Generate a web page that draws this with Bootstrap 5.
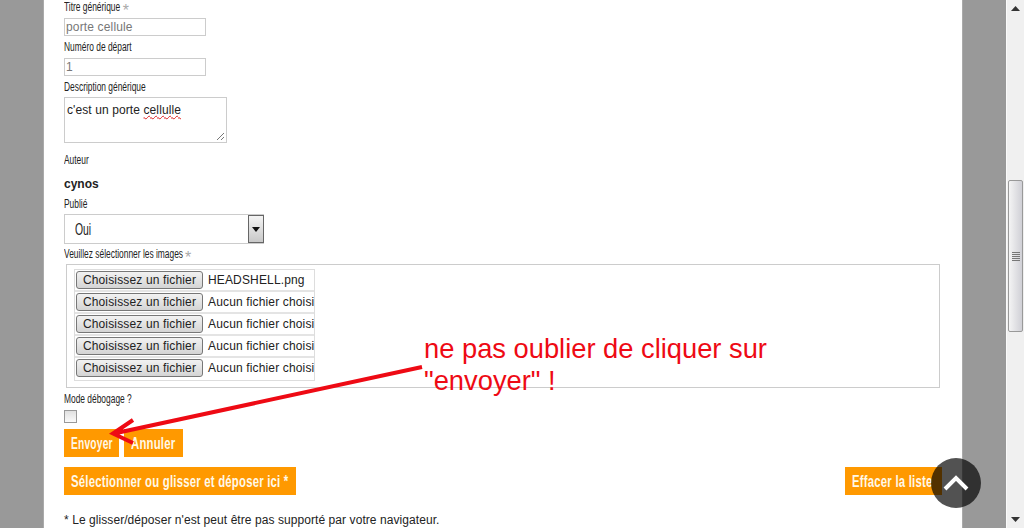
<!DOCTYPE html>
<html lang="fr">

<head>
    <meta charset="UTF-8">
    <meta name="viewport" content="width=device-width, initial-scale=1.0">
    <title>Ajout d'images</title>
    <link href="https://cdn.jsdelivr.net/npm/bootstrap@5.3.2/dist/css/bootstrap.min.css" rel="stylesheet">
    <style>
        html, body { height: 528px; overflow: hidden; }
        body { background: #999; font-family: "Liberation Sans", Arial, sans-serif; color: #222; position: relative; }
        .page-wrap { width: 1006px; height: 528px; padding-left: 43px; }
        .page-sheet { width: 920px; height: 528px; background: #fff; padding: 0 20px; overflow: hidden; border-left: 1px solid #aaa; border-right: 1px solid #aaa; }
        .lbl { display: block; width: 140%; height: 14px; font-size: 12px; line-height: 14px; color: #222; margin: 0; transform: scaleX(.7); transform-origin: left center; }
        .lbl i { display: inline-block; margin-left: 2px; font-style: normal; color: #aaa; font-size: 12px; line-height: 12px; vertical-align: -4px; transform: scale(1.9, 1.3); }
        .fld { display: block; width: 142px; height: 18px; border: 1px solid #ccc; border-radius: 0; padding: 0 1px; font-size: 12px; letter-spacing: .15px; line-height: 16px; color: #777; font-family: "Liberation Sans", sans-serif; }
        .fld-area { width: 163px; height: 46px; border: 1px solid #ccc; padding: 4px 2px; font-size: 12px; letter-spacing: .1px; line-height: 16px; color: #222; position: relative; }
        .fld-area span { text-decoration: underline wavy #d22; text-decoration-thickness: 1px; }
        .fld-area svg { position: absolute; right: 1px; bottom: 1px; }
        .pick { width: 200px; height: 30px; border: 1px solid #ccc; border-right: 0; font-size: 16px; color: #222; padding-left: 10px; }
        .pick-val { display: inline-block; padding-top: 2px; transform: scaleX(.65); transform-origin: left center; }
        .pick-arrow { width: 16px; height: 28px; border: 1px solid #666; background: linear-gradient(#f4f4f4, #c8c8c8); }
        .file-box { width: 874px; height: 124px; margin-left: 2px; border: 1px solid #ccc; padding: 4px 7px; }
        .file-list { width: 241px; border: 1px solid #ddd; }
        .file-row { height: 22px; border-bottom: 2px solid #e4e4e4; font-size: 12px; letter-spacing: .15px; color: #222; padding-left: 1px; white-space: nowrap; overflow: hidden; }
        .file-row:last-child { border-bottom-color: transparent; }
        .file-btn { height: 18px; width: 127px; padding: 0; border: 1px solid #777; border-radius: 3px; background: linear-gradient(#f2f2f2, #d4d4d4); font-size: 12px; letter-spacing: .15px; line-height: 16px; color: #222; margin-right: 5px; flex: none; }
        .chk { width: 13px; height: 13px; border: 1px solid #999; background: linear-gradient(#e0e0e0, #fafafa); }
        .act { background: #ff9900; color: #fff8e8; border: 0; border-radius: 0; height: 28px; padding: 2px 7px 0; font-size: 16px; font-weight: 700; line-height: 26px; letter-spacing: .3px; white-space: nowrap; text-align: left; }
        .act:hover { background: #ff9900; color: #fff8e8; }
        .act span { display: inline-block; transform: scaleX(.71); transform-origin: left center; }
        .w-send { width: 55px; }
        .w-send span { transform: scaleX(.64); }
        .w-cancel { width: 59px; }
        .w-pick { width: 232px; }
        .w-clear { width: 97px; }
        .note { font-size: 12px; letter-spacing: .07px; line-height: 14px; color: #222; margin: 18px 0 0; }
        .author { font-size: 12px; font-weight: 700; line-height: 14px; }
        .sp-3 { margin-top: 3px; }
        .sp-6 { margin-top: 6px; }
        .sp-10 { margin-top: 10px; }
        .fake-bar { position: absolute; top: 0; left: 1006px; width: 18px; height: 528px; background: #f0f0f0; border-left: 1px solid #fafafa; }
        .fake-thumb { position: absolute; left: 1px; top: 180px; width: 15px; height: 152px; border: 1px solid #999; border-radius: 2px; background: linear-gradient(90deg, #f4f4f4, #d0d0d6); }
        .tip-text { position: absolute; left: 424px; top: 333px; color: #ee0a14; font-size: 27.3px; line-height: 32px; white-space: nowrap; }
        .tip-arrow { position: absolute; left: 0; top: 0; pointer-events: none; }
        .go-top { position: absolute; left: 931px; top: 458px; width: 50px; height: 50px; border-radius: 50%; background: rgba(0, 0, 0, .68); }
    </style>
</head>

<body>
    <div class="page-wrap">
        <div class="page-sheet">
            <label class="lbl">Titre générique <i>*</i></label>
            <input class="fld mt-1" type="text" value="porte cellule">
            <label class="lbl mt-1">Numéro de départ</label>
            <input class="fld mt-1" type="text" value="1">
            <label class="lbl mt-1">Description générique</label>
            <div class="fld-area sp-3">c'est un porte <span>cellulle</span>
                <svg width="10" height="10" viewBox="0 0 10 10"><path d="M2 9 9 2M6 9 9 6" stroke="#777" fill="none"/></svg>
            </div>
            <label class="lbl sp-10">Auteur</label>
            <div class="author sp-10">cynos</div>
            <label class="lbl sp-6">Publié</label>
            <div class="pick d-flex align-items-center justify-content-between sp-3">
                <span class="pick-val">Oui</span>
                <span class="pick-arrow d-flex align-items-center justify-content-center">
                    <svg width="8" height="5" viewBox="0 0 8 5"><path d="M0 0h8L4 5z" fill="#111"/></svg>
                </span>
            </div>
            <label class="lbl sp-3">Veuillez sélectionner les images <i>*</i></label>
            <div class="file-box sp-3">
                <div class="file-list">
                    <div class="file-row d-flex align-items-center"><button class="file-btn" type="button">Choisissez un fichier</button>HEADSHELL.png</div>
                    <div class="file-row d-flex align-items-center"><button class="file-btn" type="button">Choisissez un fichier</button>Aucun fichier choisi</div>
                    <div class="file-row d-flex align-items-center"><button class="file-btn" type="button">Choisissez un fichier</button>Aucun fichier choisi</div>
                    <div class="file-row d-flex align-items-center"><button class="file-btn" type="button">Choisissez un fichier</button>Aucun fichier choisi</div>
                    <div class="file-row d-flex align-items-center"><button class="file-btn" type="button">Choisissez un fichier</button>Aucun fichier choisi</div>
                </div>
            </div>
            <label class="lbl mt-1">Mode débogage ?</label>
            <div class="chk mt-1"></div>
            <div class="d-flex sp-6" style="gap:5px">
                <button class="btn act w-send" type="button"><span>Envoyer</span></button>
                <button class="btn act w-cancel" type="button"><span>Annuler</span></button>
            </div>
            <div class="d-flex justify-content-between sp-10" style="width:878px">
                <button class="btn act w-pick" type="button"><span>Sélectionner ou glisser et déposer ici *</span></button>
                <button class="btn act w-clear" type="button"><span>Effacer la liste</span></button>
            </div>
            <p class="note">* Le glisser/déposer n'est peut être pas supporté par votre navigateur.</p>
        </div>
    </div>

    <div class="fake-bar">
        <svg class="position-absolute" style="left:4px;top:6px" width="9" height="5" viewBox="0 0 9 5"><path d="M0 5h9L4.500 0z" fill="#333"/></svg>
        <div class="fake-thumb d-flex align-items-center justify-content-center">
            <svg width="8" height="9" viewBox="0 0 8 9"><path d="M0 .5h8M0 2.500h8M0 4.500h8M0 6.500h8M0 8.500h8" stroke="#777"/></svg>
        </div>
        <svg class="position-absolute" style="left:4px;top:517px" width="9" height="5" viewBox="0 0 9 5"><path d="M0 0h9L4.500 5z" fill="#333"/></svg>
    </div>

    <div class="tip-text">ne pas oublier de cliquer sur<br>"envoyer" !</div>
    <svg class="tip-arrow" width="1024" height="528" viewBox="0 0 1024 528">
        <path d="M422 367 114 433.500M133 420 113 433.500 133 443" fill="none" stroke="#ee0a14" stroke-width="4"/>
    </svg>
    <div class="go-top d-flex align-items-center justify-content-center">
        <svg width="26" height="16" viewBox="0 0 26 16"><path d="M2 14 13 3 24 14" fill="none" stroke="#fff" stroke-width="4"/></svg>
    </div>
    <script src="https://cdn.jsdelivr.net/npm/bootstrap@5.3.2/dist/js/bootstrap.bundle.min.js"></script>
</body>

</html>
